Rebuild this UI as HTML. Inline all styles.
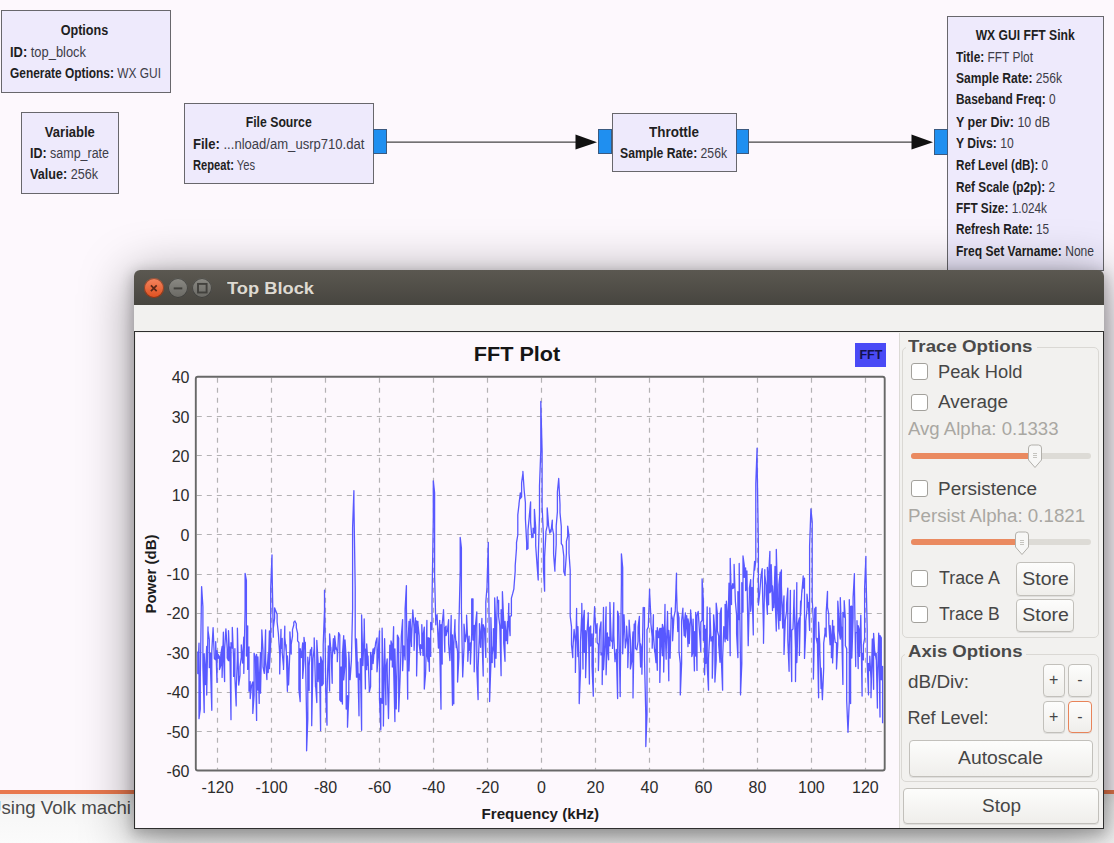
<!DOCTYPE html>
<html><head><meta charset="utf-8"><title>Top Block</title>
<style>
html,body{margin:0;padding:0}
body{width:1114px;height:843px;position:relative;overflow:hidden;background:#fdf8fd;font-family:"Liberation Sans",sans-serif}
</style></head><body>
<div style="position:absolute;left:1.0px;top:10.0px;width:170.0px;height:82.8px;background:#eeeafc;border:1.6px solid #68676c;box-sizing:border-box;"></div>
<div style="position:absolute;left:84.40px;width:0;display:flex;justify-content:center;top:23.15px;font-size:14px;line-height:1;white-space:nowrap;font-weight:normal;color:#1e1e22;"><span id="t0" style="display:inline-block;transform:scaleX(0.9000);transform-origin:50% 0;"><b>Options</b></span></div>
<div style="position:absolute;left:9.70px;top:44.85px;font-size:14px;line-height:1;white-space:nowrap;font-weight:normal;color:#1e1e22;"><span id="t1" style="display:inline-block;transform:scaleX(0.9212);transform-origin:0 0;"><b>ID:</b> <span style="color:#3d3d48">top_block</span></span></div>
<div style="position:absolute;left:9.70px;top:65.85px;font-size:14px;line-height:1;white-space:nowrap;font-weight:normal;color:#1e1e22;"><span id="t2" style="display:inline-block;transform:scaleX(0.8513);transform-origin:0 0;"><b>Generate Options:</b> <span style="color:#3d3d48">WX GUI</span></span></div>
<div style="position:absolute;left:21.0px;top:112.4px;width:97.5px;height:81.8px;background:#eeeafc;border:1.6px solid #68676c;box-sizing:border-box;"></div>
<div style="position:absolute;left:69.80px;width:0;display:flex;justify-content:center;top:124.95px;font-size:14px;line-height:1;white-space:nowrap;font-weight:normal;color:#1e1e22;"><span id="t3" style="display:inline-block;transform:scaleX(0.9310);transform-origin:50% 0;"><b>Variable</b></span></div>
<div style="position:absolute;left:29.60px;top:146.45px;font-size:14px;line-height:1;white-space:nowrap;font-weight:normal;color:#1e1e22;"><span id="t4" style="display:inline-block;transform:scaleX(0.8905);transform-origin:0 0;"><b>ID:</b> <span style="color:#3d3d48">samp_rate</span></span></div>
<div style="position:absolute;left:29.60px;top:167.15px;font-size:14px;line-height:1;white-space:nowrap;font-weight:normal;color:#1e1e22;"><span id="t5" style="display:inline-block;transform:scaleX(0.9007);transform-origin:0 0;"><b>Value:</b> <span style="color:#3d3d48">256k</span></span></div>
<div style="position:absolute;left:184.0px;top:102.5px;width:189.5px;height:81.3px;background:#eeeafc;border:1.6px solid #68676c;box-sizing:border-box;"></div>
<div style="position:absolute;left:373.0px;top:129.0px;width:13.7px;height:25.2px;background:#1f8ff0;border:1px solid #3b5a80;box-sizing:border-box;"></div>
<div style="position:absolute;left:278.80px;width:0;display:flex;justify-content:center;top:114.85px;font-size:14px;line-height:1;white-space:nowrap;font-weight:normal;color:#1e1e22;"><span id="t6" style="display:inline-block;transform:scaleX(0.8745);transform-origin:50% 0;"><b>File Source</b></span></div>
<div style="position:absolute;left:193.20px;top:136.55px;font-size:14px;line-height:1;white-space:nowrap;font-weight:normal;color:#1e1e22;"><span id="t7" style="display:inline-block;transform:scaleX(0.9332);transform-origin:0 0;"><b>File:</b> <span style="color:#3d3d48">...nload/am_usrp710.dat</span></span></div>
<div style="position:absolute;left:193.20px;top:157.65px;font-size:14px;line-height:1;white-space:nowrap;font-weight:normal;color:#1e1e22;"><span id="t8" style="display:inline-block;transform:scaleX(0.7965);transform-origin:0 0;"><b>Repeat:</b> <span style="color:#3d3d48">Yes</span></span></div>
<div style="position:absolute;left:611.5px;top:112.6px;width:125.0px;height:59.5px;background:#eeeafc;border:1.6px solid #68676c;box-sizing:border-box;"></div>
<div style="position:absolute;left:598.0px;top:129.3px;width:14.0px;height:25.1px;background:#1f8ff0;border:1px solid #3b5a80;box-sizing:border-box;"></div>
<div style="position:absolute;left:736.0px;top:129.3px;width:13.0px;height:25.1px;background:#1f8ff0;border:1px solid #3b5a80;box-sizing:border-box;"></div>
<div style="position:absolute;left:674.00px;width:0;display:flex;justify-content:center;top:124.55px;font-size:14px;line-height:1;white-space:nowrap;font-weight:normal;color:#1e1e22;"><span id="t9" style="display:inline-block;transform:scaleX(0.9595);transform-origin:50% 0;"><b>Throttle</b></span></div>
<div style="position:absolute;left:620.10px;top:146.45px;font-size:14px;line-height:1;white-space:nowrap;font-weight:normal;color:#1e1e22;"><span id="t10" style="display:inline-block;transform:scaleX(0.8703);transform-origin:0 0;"><b>Sample Rate:</b> <span style="color:#3d3d48">256k</span></span></div>
<div style="position:absolute;left:947.2px;top:16.0px;width:156.8px;height:254.5px;background:#eeeafc;border:1.6px solid #68676c;box-sizing:border-box;"></div>
<div style="position:absolute;left:934.2px;top:129.0px;width:14.0px;height:25.5px;background:#1f8ff0;border:1px solid #3b5a80;box-sizing:border-box;"></div>
<div style="position:absolute;left:1025.00px;width:0;display:flex;justify-content:center;top:27.75px;font-size:14px;line-height:1;white-space:nowrap;font-weight:normal;color:#1e1e22;"><span id="t11" style="display:inline-block;transform:scaleX(0.8658);transform-origin:50% 0;"><b>WX GUI FFT Sink</b></span></div>
<div style="position:absolute;left:956.00px;top:49.55px;font-size:14px;line-height:1;white-space:nowrap;font-weight:normal;color:#1e1e22;"><span id="t12" style="display:inline-block;transform:scaleX(0.8507);transform-origin:0 0;"><b>Title:</b> <span style="color:#3d3d48">FFT Plot</span></span></div>
<div style="position:absolute;left:956.00px;top:71.25px;font-size:14px;line-height:1;white-space:nowrap;font-weight:normal;color:#1e1e22;"><span id="t13" style="display:inline-block;transform:scaleX(0.8621);transform-origin:0 0;"><b>Sample Rate:</b> <span style="color:#3d3d48">256k</span></span></div>
<div style="position:absolute;left:956.00px;top:92.35px;font-size:14px;line-height:1;white-space:nowrap;font-weight:normal;color:#1e1e22;"><span id="t14" style="display:inline-block;transform:scaleX(0.8485);transform-origin:0 0;"><b>Baseband Freq:</b> <span style="color:#3d3d48">0</span></span></div>
<div style="position:absolute;left:956.00px;top:114.55px;font-size:14px;line-height:1;white-space:nowrap;font-weight:normal;color:#1e1e22;"><span id="t15" style="display:inline-block;transform:scaleX(0.8902);transform-origin:0 0;"><b>Y per Div:</b> <span style="color:#3d3d48">10 dB</span></span></div>
<div style="position:absolute;left:956.00px;top:135.65px;font-size:14px;line-height:1;white-space:nowrap;font-weight:normal;color:#1e1e22;"><span id="t16" style="display:inline-block;transform:scaleX(0.8652);transform-origin:0 0;"><b>Y Divs:</b> <span style="color:#3d3d48">10</span></span></div>
<div style="position:absolute;left:956.00px;top:158.05px;font-size:14px;line-height:1;white-space:nowrap;font-weight:normal;color:#1e1e22;"><span id="t17" style="display:inline-block;transform:scaleX(0.8327);transform-origin:0 0;"><b>Ref Level (dB):</b> <span style="color:#3d3d48">0</span></span></div>
<div style="position:absolute;left:956.00px;top:179.55px;font-size:14px;line-height:1;white-space:nowrap;font-weight:normal;color:#1e1e22;"><span id="t18" style="display:inline-block;transform:scaleX(0.8426);transform-origin:0 0;"><b>Ref Scale (p2p):</b> <span style="color:#3d3d48">2</span></span></div>
<div style="position:absolute;left:956.00px;top:201.05px;font-size:14px;line-height:1;white-space:nowrap;font-weight:normal;color:#1e1e22;"><span id="t19" style="display:inline-block;transform:scaleX(0.8413);transform-origin:0 0;"><b>FFT Size:</b> <span style="color:#3d3d48">1.024k</span></span></div>
<div style="position:absolute;left:956.00px;top:221.85px;font-size:14px;line-height:1;white-space:nowrap;font-weight:normal;color:#1e1e22;"><span id="t20" style="display:inline-block;transform:scaleX(0.8416);transform-origin:0 0;"><b>Refresh Rate:</b> <span style="color:#3d3d48">15</span></span></div>
<div style="position:absolute;left:956.00px;top:243.85px;font-size:14px;line-height:1;white-space:nowrap;font-weight:normal;color:#1e1e22;"><span id="t21" style="display:inline-block;transform:scaleX(0.8609);transform-origin:0 0;"><b>Freq Set Varname:</b> <span style="color:#3d3d48">None</span></span></div>
<svg style="position:absolute;left:0;top:0" width="1114" height="843"><line x1="386.7" y1="142.2" x2="578" y2="142.2" stroke="#444" stroke-width="1.3"/><polygon points="575.5,134.5 597,142.2 575.5,149.5" fill="#111"/><line x1="749" y1="142.2" x2="914" y2="142.2" stroke="#444" stroke-width="1.3"/><polygon points="911.5,134.5 933,142.2 911.5,149.5" fill="#111"/></svg>
<div style="position:absolute;left:0;top:790px;width:1114px;height:4px;background:#e8784d"></div>
<div style="position:absolute;left:0;top:794px;width:1114px;height:49px;background:linear-gradient(#ebebea,#f6f6f6 12px,#fbfbfb)"></div>
<div style="position:absolute;left:-11.60px;top:799.36px;font-size:18px;line-height:1;white-space:nowrap;font-weight:normal;color:#4a4a4a;"><span id="t22" style="display:inline-block;transform:scaleX(1.0358);transform-origin:0 0;">Using Volk machi</span></div>
<div style="position:absolute;left:134px;top:270.3px;width:970px;height:558.7px;border-radius:6px 6px 0 0;box-shadow:0 8px 50px 4px rgba(0,0,0,0.36),0 4px 14px 2px rgba(0,0,0,0.22);"></div>
<div style="position:absolute;left:134px;top:270.3px;width:970px;height:34.5px;border-radius:6px 6px 0 0;background:linear-gradient(#5b5851,#47453f);"></div>
<div style="position:absolute;left:134px;top:304.8px;width:970px;height:26.5px;background:#f2f1ef;"></div>
<div style="position:absolute;left:134px;top:331px;width:970px;height:498px;background:#f2f1ef;border:1.5px solid #2e2e2e;border-top-width:1.6px;box-sizing:border-box;"></div>
<div style="position:absolute;left:135.5px;top:333px;width:763.5px;height:494.5px;background:#fdf8fd;"></div>
<svg style="position:absolute;left:0;top:0" width="1114" height="843">
<path d="M217.5 377.7V769.5 M271.5 377.7V769.5 M325.5 377.7V769.5 M379.5 377.7V769.5 M433.5 377.7V769.5 M487.5 377.7V769.5 M541.5 377.7V769.5 M595.5 377.7V769.5 M649.5 377.7V769.5 M703.5 377.7V769.5 M757.5 377.7V769.5 M811.5 377.7V769.5 M865.5 377.7V769.5 M196.8 416.5H883.7 M196.8 455.5H883.7 M196.8 495.5H883.7 M196.8 534.5H883.7 M196.8 574.5H883.7 M196.8 613.5H883.7 M196.8 652.5H883.7 M196.8 692.5H883.7 M196.8 731.5H883.7" stroke="#b4b2b4" stroke-width="1.2" stroke-dasharray="5 5" fill="none"/>
<path id="trace" d="M197.8 651.5 L197.8 673.6 L199.0 643.2 L199.0 718.7 L200.3 709.1 L200.3 677.6 L201.6 586.6 L202.9 606.8 L202.9 666.0 L204.2 712.5 L204.2 653.7 L205.4 684.6 L205.4 675.9 L206.7 646.3 L206.7 695.1 L208.0 627.0 L208.0 630.3 L209.3 639.7 L209.3 667.7 L210.6 653.4 L210.6 671.1 L211.8 710.3 L211.8 651.1 L213.1 627.7 L213.1 628.0 L214.4 658.7 L215.7 659.7 L215.7 641.7 L217.0 682.4 L217.0 650.7 L218.2 658.3 L218.2 654.6 L219.5 656.8 L219.5 669.6 L220.8 665.5 L220.8 654.7 L222.1 646.5 L222.1 677.4 L223.4 632.2 L223.4 649.5 L224.6 681.6 L224.6 649.4 L225.9 628.9 L227.2 649.0 L227.2 657.9 L228.5 660.6 L228.5 630.7 L229.8 661.1 L229.8 646.8 L231.0 719.7 L231.0 642.7 L232.3 648.1 L232.3 627.5 L233.6 659.5 L233.6 676.4 L234.9 648.7 L234.9 677.8 L236.2 705.9 L236.2 690.0 L237.4 658.1 L237.4 628.2 L238.7 685.1 L240.0 675.2 L240.0 666.9 L241.3 657.1 L241.3 644.8 L242.6 663.0 L242.6 661.7 L243.8 637.2 L243.8 673.4 L245.1 609.5 L245.1 573.4 L246.4 580.4 L246.4 656.0 L247.7 625.8 L247.7 669.4 L249.0 646.8 L249.0 691.2 L250.2 681.7 L250.2 698.6 L251.5 685.6 L252.8 681.9 L252.8 713.4 L254.1 695.2 L254.1 653.2 L255.4 656.9 L255.4 659.0 L256.6 720.4 L256.6 654.5 L257.9 690.1 L257.9 656.8 L259.2 703.4 L259.2 683.9 L260.5 652.6 L260.5 693.2 L261.8 638.5 L261.8 629.9 L263.0 650.2 L263.0 666.8 L264.3 673.4 L265.6 630.0 L265.6 659.9 L266.9 679.5 L266.9 674.8 L268.2 653.7 L268.2 672.5 L269.4 630.9 L269.4 668.6 L270.7 643.3 L270.7 588.2 L272.0 555.0 L272.0 564.6 L273.3 637.2 L273.3 628.4 L274.6 618.2 L274.6 607.8 L275.8 611.1 L277.1 614.2 L277.1 621.7 L278.4 633.7 L278.4 633.9 L279.7 654.4 L279.7 673.9 L281.0 629.3 L281.0 648.4 L282.2 638.4 L282.2 652.5 L283.5 666.6 L283.5 669.4 L284.8 626.2 L284.8 637.4 L286.1 650.5 L286.1 644.7 L287.4 691.3 L287.4 655.9 L288.6 684.9 L289.9 649.2 L289.9 631.8 L291.2 654.1 L291.2 644.3 L292.5 636.1 L292.5 629.7 L293.8 625.0 L293.8 622.1 L295.0 620.9 L295.0 621.4 L296.3 623.7 L296.3 627.6 L297.6 633.4 L297.6 640.8 L298.9 642.7 L298.9 689.5 L300.2 701.6 L300.2 648.6 L301.4 657.5 L302.7 642.9 L302.7 678.4 L304.0 660.6 L304.0 637.4 L305.3 649.2 L305.3 642.3 L306.6 719.3 L306.6 750.8 L307.8 719.3 L307.8 657.2 L309.1 690.5 L309.1 666.1 L310.4 650.0 L310.4 655.2 L311.7 647.5 L311.7 725.7 L313.0 658.7 L314.2 648.1 L314.2 637.8 L315.5 686.9 L315.5 683.1 L316.8 702.5 L316.8 640.4 L318.1 662.5 L318.1 681.6 L319.4 665.9 L319.4 663.4 L320.6 730.6 L320.6 656.8 L321.9 661.2 L321.9 685.7 L323.2 683.6 L323.2 645.1 L324.5 610.0 L324.5 590.2 L325.8 693.7 L327.0 725.2 L327.0 693.7 L328.3 648.3 L328.3 645.8 L329.6 691.0 L329.6 633.9 L330.9 650.7 L330.9 647.5 L332.2 683.3 L332.2 660.1 L333.4 638.7 L333.4 647.9 L334.7 653.6 L334.7 635.8 L336.0 649.3 L336.0 646.8 L337.3 652.2 L337.3 661.7 L338.6 632.6 L339.8 635.0 L339.8 699.8 L341.1 701.6 L341.1 667.0 L342.4 704.0 L342.4 655.4 L343.7 635.7 L343.7 679.9 L345.0 665.3 L345.0 640.0 L346.2 658.4 L346.2 709.1 L347.5 695.7 L347.5 727.2 L348.8 695.7 L348.8 652.1 L350.1 679.6 L351.4 660.4 L351.4 659.7 L352.6 608.8 L352.6 527.7 L353.9 490.7 L353.9 502.3 L355.2 587.8 L355.2 636.0 L356.5 677.2 L356.5 639.0 L357.8 677.4 L357.8 661.9 L359.0 715.8 L359.0 674.0 L360.3 679.6 L360.3 658.6 L361.6 730.3 L361.6 615.0 L362.9 665.6 L364.2 630.6 L364.2 618.9 L365.4 688.9 L365.4 649.1 L366.7 669.7 L366.7 643.9 L368.0 665.5 L368.0 655.9 L369.3 688.5 L369.3 691.8 L370.6 686.7 L370.6 652.4 L371.8 669.5 L371.8 658.6 L373.1 648.9 L373.1 663.5 L374.4 648.0 L374.4 653.6 L375.7 642.5 L377.0 637.8 L377.0 671.8 L378.2 657.6 L378.2 651.3 L379.5 631.0 L379.5 698.4 L380.8 729.9 L380.8 698.4 L382.1 703.3 L382.1 628.1 L383.4 687.0 L383.4 726.1 L384.6 647.3 L384.6 638.6 L385.9 704.8 L385.9 669.3 L387.2 658.9 L387.2 670.2 L388.5 718.5 L389.8 645.1 L389.8 645.8 L391.0 660.0 L391.0 640.8 L392.3 645.8 L392.3 667.1 L393.6 626.7 L393.6 666.1 L394.9 721.5 L394.9 648.8 L396.2 703.6 L396.2 708.9 L397.4 651.0 L397.4 635.1 L398.7 638.3 L398.7 711.7 L400.0 680.8 L401.3 639.5 L401.3 636.6 L402.6 619.6 L402.6 670.7 L403.8 645.9 L403.8 646.7 L405.1 659.8 L405.1 609.3 L406.4 585.6 L406.4 607.2 L407.7 699.2 L407.7 649.8 L409.0 621.4 L409.0 670.9 L410.2 632.3 L410.2 619.1 L411.5 646.4 L411.5 640.0 L412.8 609.9 L414.1 628.2 L414.1 650.3 L415.4 617.8 L415.4 632.6 L416.6 620.8 L416.6 675.9 L417.9 621.4 L417.9 623.4 L419.2 635.9 L419.2 644.3 L420.5 655.0 L420.5 644.6 L421.8 648.5 L421.8 624.6 L423.0 655.5 L423.0 636.6 L424.3 627.1 L424.3 689.0 L425.6 673.4 L426.9 620.4 L426.9 653.8 L428.2 661.5 L428.2 637.6 L429.4 671.3 L429.4 638.1 L430.7 656.4 L430.7 622.4 L432.0 629.7 L432.0 602.7 L433.3 517.9 L433.3 480.8 L434.6 492.8 L434.6 575.2 L435.8 624.8 L435.8 620.9 L437.1 614.7 L438.4 648.0 L438.4 648.1 L439.7 620.3 L439.7 646.6 L441.0 709.2 L441.0 624.7 L442.2 664.0 L442.2 624.0 L443.5 610.7 L443.5 609.6 L444.8 652.0 L444.8 628.5 L446.1 626.1 L446.1 635.7 L447.4 630.4 L447.4 631.4 L448.6 619.7 L448.6 643.7 L449.9 660.5 L451.2 615.5 L451.2 630.4 L452.5 705.3 L452.5 634.8 L453.8 703.8 L453.8 645.4 L455.0 619.6 L455.0 630.8 L456.3 647.7 L456.3 641.2 L457.6 652.1 L457.6 682.0 L458.9 657.6 L458.9 625.8 L460.2 570.5 L460.2 537.5 L461.4 547.8 L461.4 607.4 L462.7 676.9 L464.0 647.2 L464.0 624.2 L465.3 637.6 L465.3 641.6 L466.6 633.3 L466.6 615.2 L467.8 644.3 L467.8 661.3 L469.1 636.1 L469.1 650.4 L470.4 642.9 L470.4 664.0 L471.7 634.1 L471.7 599.0 L473.0 598.9 L473.0 640.1 L474.2 625.5 L474.2 671.8 L475.5 625.0 L476.8 611.9 L476.8 668.1 L478.1 699.6 L478.1 668.1 L479.4 634.1 L479.4 623.7 L480.6 647.3 L480.6 639.8 L481.9 618.5 L481.9 635.7 L483.2 676.1 L483.2 624.7 L484.5 628.6 L484.5 630.6 L485.8 657.4 L485.8 602.0 L487.0 587.3 L488.3 542.3 L488.3 552.7 L489.6 663.4 L489.6 701.6 L490.9 663.4 L490.9 617.6 L492.2 662.6 L492.2 654.9 L493.4 645.4 L493.4 628.6 L494.7 667.2 L494.7 598.0 L496.0 631.5 L496.0 658.3 L497.3 596.8 L497.3 602.9 L498.6 600.3 L498.6 616.4 L499.8 625.7 L501.1 675.7 L501.1 609.7 L502.4 628.3 L502.4 591.7 L503.7 621.4 L503.7 642.9 L505.0 661.3 L505.0 621.4 L506.2 640.3 L506.2 640.7 L507.5 621.7 L507.5 643.7 L508.8 603.3 L508.8 620.1 L510.1 635.6 L510.1 616.2 L511.4 615.8 L511.4 598.2 L512.6 593.9 L513.9 588.8 L513.9 588.3 L515.2 571.0 L515.2 565.7 L516.5 548.3 L516.5 542.7 L517.8 535.0 L517.8 514.8 L519.0 504.6 L519.0 503.8 L520.3 493.0 L520.3 498.6 L521.6 496.8 L521.6 482.9 L522.9 473.3 L522.9 471.5 L524.2 490.7 L525.4 502.8 L525.4 518.7 L526.7 543.4 L526.7 549.6 L528.0 548.4 L528.0 530.1 L529.3 516.5 L529.3 516.1 L530.6 501.8 L530.6 521.6 L531.8 537.7 L531.8 533.7 L533.1 537.3 L533.1 528.1 L534.4 533.2 L534.4 509.4 L535.7 527.8 L535.7 545.8 L537.0 564.3 L538.2 580.0 L538.2 560.2 L539.5 514.5 L539.5 485.9 L540.8 450.3 L540.8 401.5 L542.1 451.5 L542.1 506.2 L543.4 535.1 L543.4 568.8 L544.6 591.2 L544.6 557.2 L545.9 533.9 L545.9 531.7 L547.2 525.9 L547.2 507.8 L548.5 523.9 L548.5 525.0 L549.8 533.0 L551.0 529.3 L551.0 531.8 L552.3 520.1 L552.3 527.6 L553.6 534.1 L553.6 554.1 L554.9 571.2 L554.9 567.2 L556.2 544.4 L556.2 526.0 L557.4 511.8 L557.4 492.0 L558.7 478.9 L558.7 478.5 L560.0 504.6 L560.0 512.6 L561.3 526.8 L561.3 543.6 L562.6 545.7 L563.8 556.3 L563.8 571.6 L565.1 575.5 L565.1 572.6 L566.4 553.6 L566.4 541.4 L567.7 536.1 L567.7 526.1 L569.0 536.0 L569.0 553.1 L570.2 570.2 L570.2 616.2 L571.5 626.9 L571.5 644.6 L572.8 657.6 L572.8 650.0 L574.1 629.5 L575.4 642.4 L575.4 672.4 L576.6 608.4 L576.6 619.4 L577.9 656.5 L577.9 626.6 L579.2 672.0 L579.2 703.6 L580.5 672.0 L580.5 641.5 L581.8 612.1 L581.8 603.3 L583.0 669.1 L583.0 622.6 L584.3 610.3 L584.3 652.4 L585.6 630.7 L585.6 677.7 L586.9 633.2 L588.2 615.9 L588.2 612.7 L589.4 684.1 L589.4 628.3 L590.7 626.0 L590.7 646.0 L592.0 634.0 L592.0 665.7 L593.3 696.2 L593.3 639.4 L594.6 606.6 L594.6 609.8 L595.8 630.0 L595.8 633.1 L597.1 623.7 L597.1 642.4 L598.4 644.7 L598.4 670.5 L599.7 629.5 L601.0 621.9 L601.0 654.9 L602.2 652.9 L602.2 684.5 L603.5 607.5 L603.5 669.7 L604.8 646.5 L604.8 647.5 L606.1 606.8 L606.1 674.8 L607.4 633.0 L607.4 645.4 L608.6 659.8 L608.6 637.2 L609.9 645.9 L609.9 602.3 L611.2 640.3 L612.5 642.5 L612.5 648.4 L613.8 602.6 L613.8 635.2 L615.0 661.7 L615.0 660.3 L616.3 651.4 L616.3 649.4 L617.6 698.6 L617.6 611.2 L618.9 616.4 L618.9 628.8 L620.2 696.6 L620.2 687.5 L621.4 583.7 L621.4 553.8 L622.7 567.9 L622.7 653.8 L624.0 614.7 L625.3 645.1 L625.3 647.9 L626.6 637.9 L626.6 626.2 L627.8 645.3 L627.8 667.6 L629.1 628.8 L629.1 620.1 L630.4 639.8 L630.4 668.9 L631.7 661.6 L631.7 654.5 L633.0 631.8 L633.0 697.9 L634.2 624.1 L634.2 629.7 L635.5 620.9 L635.5 648.4 L636.8 649.9 L638.1 641.5 L638.1 627.2 L639.4 616.3 L639.4 632.8 L640.6 667.1 L640.6 644.0 L641.9 650.9 L641.9 674.2 L643.2 607.5 L643.2 610.2 L644.5 607.6 L644.5 659.2 L645.8 715.0 L645.8 746.5 L647.0 715.0 L647.0 629.7 L648.3 626.9 L649.6 589.3 L649.6 592.1 L650.9 617.7 L650.9 623.6 L652.2 637.2 L652.2 648.2 L653.4 614.7 L653.4 633.9 L654.7 652.2 L654.7 649.1 L656.0 662.7 L656.0 630.7 L657.3 670.3 L657.3 627.7 L658.6 637.7 L658.6 634.7 L659.8 628.3 L659.8 682.4 L661.1 628.1 L662.4 655.8 L662.4 624.4 L663.7 630.0 L663.7 672.1 L665.0 604.5 L665.0 623.8 L666.2 659.2 L666.2 652.0 L667.5 614.1 L667.5 611.5 L668.8 680.8 L668.8 630.3 L670.1 646.7 L670.1 658.2 L671.4 608.0 L671.4 614.9 L672.6 619.2 L672.6 640.8 L673.9 617.3 L675.2 610.9 L675.2 611.7 L676.5 573.1 L676.5 588.2 L677.8 631.5 L677.8 612.0 L679.0 617.9 L679.0 651.0 L680.3 663.4 L680.3 694.9 L681.6 663.4 L681.6 620.7 L682.9 608.2 L682.9 613.4 L684.2 635.7 L684.2 625.1 L685.4 612.9 L685.4 637.1 L686.7 615.6 L688.0 646.6 L688.0 618.9 L689.3 626.8 L689.3 643.5 L690.6 613.4 L690.6 610.0 L691.8 626.6 L691.8 656.5 L693.1 651.4 L693.1 619.1 L694.4 670.9 L694.4 631.6 L695.7 656.0 L695.7 612.3 L697.0 670.4 L697.0 615.5 L698.2 611.4 L699.5 631.7 L699.5 631.8 L700.8 651.7 L700.8 622.2 L702.1 620.3 L702.1 578.8 L703.4 601.3 L703.4 640.4 L704.6 625.4 L704.6 674.8 L705.9 629.2 L705.9 663.3 L707.2 606.8 L707.2 666.3 L708.5 690.2 L708.5 658.7 L709.8 633.2 L709.8 607.9 L711.0 641.1 L712.3 636.7 L712.3 678.2 L713.6 629.5 L713.6 614.8 L714.9 631.3 L714.9 682.0 L716.2 660.5 L716.2 603.2 L717.4 613.8 L717.4 630.8 L718.7 636.0 L718.7 644.9 L720.0 662.3 L720.0 614.1 L721.3 608.0 L721.3 658.7 L722.6 690.2 L722.6 658.7 L723.8 626.6 L725.1 641.8 L725.1 604.3 L726.4 638.9 L726.4 601.2 L727.7 620.2 L727.7 640.4 L729.0 583.2 L729.0 584.3 L730.2 655.7 L730.2 558.3 L731.5 604.5 L731.5 589.5 L732.8 583.7 L732.8 588.5 L734.1 587.2 L734.1 564.5 L735.4 601.6 L736.6 615.3 L736.6 633.7 L737.9 657.6 L737.9 591.6 L739.2 619.6 L739.2 563.4 L740.5 663.4 L740.5 694.9 L741.8 663.4 L741.8 582.7 L743.0 612.1 L743.0 556.0 L744.3 565.6 L744.3 577.4 L745.6 567.8 L745.6 590.6 L746.9 588.2 L746.9 571.0 L748.2 645.7 L749.4 594.8 L749.4 588.2 L750.7 579.7 L750.7 611.3 L752.0 590.7 L752.0 587.5 L753.3 634.9 L753.3 580.5 L754.6 561.3 L754.6 570.1 L755.8 560.7 L755.8 483.8 L757.1 448.1 L757.1 459.6 L758.4 546.1 L758.4 605.1 L759.7 593.1 L759.7 593.3 L761.0 576.2 L762.2 568.6 L762.2 576.2 L763.5 631.8 L763.5 643.3 L764.8 569.7 L764.8 574.5 L766.1 585.4 L766.1 594.5 L767.4 614.3 L767.4 567.5 L768.6 604.8 L768.6 576.2 L769.9 551.3 L769.9 592.8 L771.2 590.1 L771.2 564.7 L772.5 610.6 L772.5 586.0 L773.8 607.6 L775.0 566.4 L775.0 596.1 L776.3 631.1 L776.3 549.4 L777.6 599.0 L777.6 609.6 L778.9 629.0 L778.9 584.9 L780.2 572.1 L780.2 620.6 L781.4 570.0 L781.4 585.8 L782.7 628.1 L782.7 612.8 L784.0 595.9 L784.0 654.4 L785.3 620.3 L786.6 611.0 L786.6 603.7 L787.8 588.1 L787.8 639.8 L789.1 671.3 L789.1 656.2 L790.4 590.3 L790.4 615.5 L791.7 681.5 L791.7 630.2 L793.0 629.0 L793.0 629.1 L794.2 590.1 L794.2 606.0 L795.5 648.1 L795.5 681.6 L796.8 582.6 L796.8 662.6 L798.1 623.3 L799.4 617.8 L799.4 655.4 L800.6 601.1 L800.6 615.5 L801.9 589.7 L801.9 592.4 L803.2 576.0 L803.2 588.2 L804.5 578.1 L804.5 658.4 L805.8 630.4 L805.8 621.2 L807.0 609.4 L807.0 594.2 L808.3 607.4 L808.3 602.4 L809.6 630.4 L809.6 546.2 L810.9 508.8 L812.2 522.0 L812.2 599.5 L813.4 622.0 L813.4 679.1 L814.7 620.5 L814.7 609.0 L816.0 607.2 L816.0 637.1 L817.3 643.7 L817.3 638.4 L818.6 697.8 L818.6 622.2 L819.8 644.8 L819.8 650.8 L821.1 688.6 L821.1 668.1 L822.4 699.6 L823.7 668.1 L823.7 643.1 L825.0 632.9 L825.0 628.1 L826.2 636.8 L826.2 612.3 L827.5 591.4 L827.5 607.2 L828.8 614.7 L828.8 623.1 L830.1 644.8 L830.1 625.6 L831.4 642.1 L831.4 657.7 L832.6 620.3 L832.6 662.9 L833.9 626.1 L833.9 631.0 L835.2 642.4 L836.5 642.9 L836.5 669.0 L837.8 643.9 L837.8 601.2 L839.0 619.1 L839.0 630.1 L840.3 639.0 L840.3 597.6 L841.6 637.2 L841.6 627.0 L842.9 684.4 L842.9 612.3 L844.2 617.0 L844.2 600.7 L845.4 619.1 L845.4 645.7 L846.7 648.7 L846.7 700.8 L848.0 732.3 L849.3 700.8 L849.3 599.7 L850.6 703.6 L850.6 606.5 L851.8 606.2 L851.8 658.0 L853.1 618.1 L853.1 597.5 L854.4 573.7 L854.4 585.5 L855.7 666.5 L855.7 632.6 L857.0 632.5 L857.0 620.7 L858.2 668.5 L858.2 625.7 L859.5 630.8 L859.5 656.4 L860.8 615.1 L862.1 696.0 L862.1 653.2 L863.4 659.9 L863.4 644.9 L864.6 638.6 L864.6 588.6 L865.9 556.3 L865.9 567.6 L867.2 629.5 L867.2 663.4 L868.5 694.9 L868.5 663.4 L869.8 670.7 L869.8 656.2 L871.0 678.9 L871.0 697.7 L872.3 639.0 L873.6 689.3 L873.6 633.3 L874.9 655.3 L874.9 651.7 L876.2 659.6 L876.2 653.3 L877.4 708.0 L877.4 683.9 L878.7 633.2 L878.7 640.7 L880.0 717.1 L880.0 635.5 L881.3 637.8 L881.3 679.8 L882.6 666.4 L882.6 723.3" stroke="#5858ff" stroke-width="1.3" fill="none" stroke-linejoin="round"/>
<rect x="195.8" y="376.7" width="688.9" height="393.8" rx="2" fill="none" stroke="#686868" stroke-width="1.9"/>
</svg>
<div style="position:absolute;left:899px;top:333px;width:1px;height:494.5px;background:#dcdad6;"></div>
<div style="position:absolute;left:143.8px;top:278.2px;width:20.0px;height:20.0px;border-radius:50%;background:linear-gradient(#f48660,#de4f1e);box-shadow:inset 0 0 0 1px rgba(40,20,10,0.45)"></div>
<div style="position:absolute;left:168.0px;top:278.2px;width:20.0px;height:20.0px;border-radius:50%;background:linear-gradient(#8b8a84,#696863);box-shadow:inset 0 0 0 1px rgba(30,30,28,0.55)"></div>
<div style="position:absolute;left:192.3px;top:278.2px;width:20.0px;height:20.0px;border-radius:50%;background:linear-gradient(#8b8a84,#696863);box-shadow:inset 0 0 0 1px rgba(30,30,28,0.55)"></div>
<svg style="position:absolute;left:0;top:0" width="1114" height="843"><path d="M150.9 285.3 L156.7 291.1 M156.7 285.3 L150.9 291.1" stroke="#5a2818" stroke-width="1.7"/><path d="M173.7 288.4 L182.3 288.4" stroke="#42413d" stroke-width="2"/><rect x="198.0" y="283.9" width="8.6" height="8.6" fill="none" stroke="#42413d" stroke-width="1.9"/></svg>
<div style="position:absolute;left:227.40px;top:281.06px;font-size:16px;line-height:1;white-space:nowrap;font-weight:bold;color:#dedad2;"><span id="t23" style="display:inline-block;transform:scaleX(1.1424);transform-origin:0 0;">Top Block</span></div>
<div style="position:absolute;left:517.00px;width:0;display:flex;justify-content:center;top:343.42px;font-size:21px;line-height:1;white-space:nowrap;font-weight:bold;color:#151515;"><span id="t24" style="display:inline-block;transform:scaleX(1.0300);transform-origin:50% 0;">FFT Plot</span></div>
<div style="position:absolute;left:855.3px;top:342.8px;width:30.3px;height:24px;background:#4a4af6"></div>
<div style="position:absolute;left:870.50px;width:0;display:flex;justify-content:center;top:348.30px;font-size:13px;line-height:1;white-space:nowrap;font-weight:bold;color:#12124e;"><span id="t25" style="display:inline-block;transform:scaleX(0.9652);transform-origin:50% 0;">FFT</span></div>
<div style="position:absolute;right:924.50px;top:370.16px;font-size:16px;line-height:1;white-space:nowrap;font-weight:normal;color:#2c2c2c;"><span id="t26" style="display:inline-block;">40</span></div>
<div style="position:absolute;right:924.50px;top:409.54px;font-size:16px;line-height:1;white-space:nowrap;font-weight:normal;color:#2c2c2c;"><span id="t27" style="display:inline-block;">30</span></div>
<div style="position:absolute;right:924.50px;top:448.92px;font-size:16px;line-height:1;white-space:nowrap;font-weight:normal;color:#2c2c2c;"><span id="t28" style="display:inline-block;">20</span></div>
<div style="position:absolute;right:924.50px;top:488.30px;font-size:16px;line-height:1;white-space:nowrap;font-weight:normal;color:#2c2c2c;"><span id="t29" style="display:inline-block;">10</span></div>
<div style="position:absolute;right:924.50px;top:527.68px;font-size:16px;line-height:1;white-space:nowrap;font-weight:normal;color:#2c2c2c;"><span id="t30" style="display:inline-block;">0</span></div>
<div style="position:absolute;right:924.50px;top:567.06px;font-size:16px;line-height:1;white-space:nowrap;font-weight:normal;color:#2c2c2c;"><span id="t31" style="display:inline-block;">-10</span></div>
<div style="position:absolute;right:924.50px;top:606.44px;font-size:16px;line-height:1;white-space:nowrap;font-weight:normal;color:#2c2c2c;"><span id="t32" style="display:inline-block;">-20</span></div>
<div style="position:absolute;right:924.50px;top:645.82px;font-size:16px;line-height:1;white-space:nowrap;font-weight:normal;color:#2c2c2c;"><span id="t33" style="display:inline-block;">-30</span></div>
<div style="position:absolute;right:924.50px;top:685.20px;font-size:16px;line-height:1;white-space:nowrap;font-weight:normal;color:#2c2c2c;"><span id="t34" style="display:inline-block;">-40</span></div>
<div style="position:absolute;right:924.50px;top:724.58px;font-size:16px;line-height:1;white-space:nowrap;font-weight:normal;color:#2c2c2c;"><span id="t35" style="display:inline-block;">-50</span></div>
<div style="position:absolute;right:924.50px;top:763.96px;font-size:16px;line-height:1;white-space:nowrap;font-weight:normal;color:#2c2c2c;"><span id="t36" style="display:inline-block;">-60</span></div>
<div style="position:absolute;left:217.62px;width:0;display:flex;justify-content:center;top:779.76px;font-size:16px;line-height:1;white-space:nowrap;font-weight:normal;color:#2c2c2c;"><span id="t37" style="display:inline-block;">-120</span></div>
<div style="position:absolute;left:271.60px;width:0;display:flex;justify-content:center;top:779.76px;font-size:16px;line-height:1;white-space:nowrap;font-weight:normal;color:#2c2c2c;"><span id="t38" style="display:inline-block;">-100</span></div>
<div style="position:absolute;left:325.58px;width:0;display:flex;justify-content:center;top:779.76px;font-size:16px;line-height:1;white-space:nowrap;font-weight:normal;color:#2c2c2c;"><span id="t39" style="display:inline-block;">-80</span></div>
<div style="position:absolute;left:379.56px;width:0;display:flex;justify-content:center;top:779.76px;font-size:16px;line-height:1;white-space:nowrap;font-weight:normal;color:#2c2c2c;"><span id="t40" style="display:inline-block;">-60</span></div>
<div style="position:absolute;left:433.54px;width:0;display:flex;justify-content:center;top:779.76px;font-size:16px;line-height:1;white-space:nowrap;font-weight:normal;color:#2c2c2c;"><span id="t41" style="display:inline-block;">-40</span></div>
<div style="position:absolute;left:487.52px;width:0;display:flex;justify-content:center;top:779.76px;font-size:16px;line-height:1;white-space:nowrap;font-weight:normal;color:#2c2c2c;"><span id="t42" style="display:inline-block;">-20</span></div>
<div style="position:absolute;left:541.50px;width:0;display:flex;justify-content:center;top:779.76px;font-size:16px;line-height:1;white-space:nowrap;font-weight:normal;color:#2c2c2c;"><span id="t43" style="display:inline-block;">0</span></div>
<div style="position:absolute;left:595.48px;width:0;display:flex;justify-content:center;top:779.76px;font-size:16px;line-height:1;white-space:nowrap;font-weight:normal;color:#2c2c2c;"><span id="t44" style="display:inline-block;">20</span></div>
<div style="position:absolute;left:649.46px;width:0;display:flex;justify-content:center;top:779.76px;font-size:16px;line-height:1;white-space:nowrap;font-weight:normal;color:#2c2c2c;"><span id="t45" style="display:inline-block;">40</span></div>
<div style="position:absolute;left:703.44px;width:0;display:flex;justify-content:center;top:779.76px;font-size:16px;line-height:1;white-space:nowrap;font-weight:normal;color:#2c2c2c;"><span id="t46" style="display:inline-block;">60</span></div>
<div style="position:absolute;left:757.42px;width:0;display:flex;justify-content:center;top:779.76px;font-size:16px;line-height:1;white-space:nowrap;font-weight:normal;color:#2c2c2c;"><span id="t47" style="display:inline-block;">80</span></div>
<div style="position:absolute;left:811.40px;width:0;display:flex;justify-content:center;top:779.76px;font-size:16px;line-height:1;white-space:nowrap;font-weight:normal;color:#2c2c2c;"><span id="t48" style="display:inline-block;">100</span></div>
<div style="position:absolute;left:865.38px;width:0;display:flex;justify-content:center;top:779.76px;font-size:16px;line-height:1;white-space:nowrap;font-weight:normal;color:#2c2c2c;"><span id="t49" style="display:inline-block;">120</span></div>
<div style="position:absolute;left:151px;top:573.5px;width:0;height:0;"><div style="position:absolute;left:-60px;top:-8px;width:120px;height:16px;transform:rotate(-90deg);text-align:center;font-size:15px;line-height:16px;font-weight:bold;color:#1c1c1c;white-space:nowrap">Power (dB)</div></div>
<div style="position:absolute;left:540.50px;width:0;display:flex;justify-content:center;top:805.50px;font-size:15px;line-height:1;white-space:nowrap;font-weight:bold;color:#1c1c1c;"><span id="t50" style="display:inline-block;transform:scaleX(1.0077);transform-origin:50% 0;">Frequency (kHz)</span></div>
<div style="position:absolute;left:901.8px;top:347.4px;width:196.8px;height:290.6px;border:1px solid #dad8d4;border-radius:5px;box-sizing:border-box;"></div>
<div style="position:absolute;left:906px;top:338px;width:131px;height:16px;background:#f2f1ef"></div>
<div style="position:absolute;left:907.80px;top:338.41px;font-size:17px;line-height:1;white-space:nowrap;font-weight:bold;color:#4a4a4a;"><span id="t51" style="display:inline-block;transform:scaleX(1.0981);transform-origin:0 0;">Trace Options</span></div>
<div style="position:absolute;left:911.4px;top:363.2px;width:17px;height:17px;background:#fff;border:1px solid #a3a19c;border-radius:3px;box-sizing:border-box;"></div>
<div style="position:absolute;left:938.40px;top:362.66px;font-size:18px;line-height:1;white-space:nowrap;font-weight:normal;color:#464646;"><span id="t52" style="display:inline-block;transform:scaleX(1.0161);transform-origin:0 0;">Peak Hold</span></div>
<div style="position:absolute;left:911.4px;top:393.7px;width:17px;height:17px;background:#fff;border:1px solid #a3a19c;border-radius:3px;box-sizing:border-box;"></div>
<div style="position:absolute;left:938.40px;top:392.96px;font-size:18px;line-height:1;white-space:nowrap;font-weight:normal;color:#464646;"><span id="t53" style="display:inline-block;transform:scaleX(1.0492);transform-origin:0 0;">Average</span></div>
<div style="position:absolute;left:907.50px;top:419.96px;font-size:18px;line-height:1;white-space:nowrap;font-weight:normal;color:#a9a7a2;"><span id="t54" style="display:inline-block;transform:scaleX(1.0323);transform-origin:0 0;">Avg Alpha: 0.1333</span></div>
<div style="position:absolute;left:911.4px;top:452.8px;width:179.6px;height:6px;border-radius:3px;background:#dddbd6"></div><div style="position:absolute;left:911.4px;top:452.8px;width:123.6px;height:6px;border-radius:3px;background:#ea8a60"></div><svg style="position:absolute;left:1027.0px;top:444.3px" width="16" height="25"><path d="M1.5 4 Q1.5 1 4.5 1 H11.5 Q14.5 1 14.5 4 V16 L8 23.5 L1.5 16 Z" fill="#f7f7f6" stroke="#b2b0ab" stroke-width="1"/><path d="M6 9.5H10M6 11.5H10M6 13.5H10" stroke="#b8b6b1" stroke-width="0.8"/></svg>
<div style="position:absolute;left:911.4px;top:480.3px;width:17px;height:17px;background:#fff;border:1px solid #a3a19c;border-radius:3px;box-sizing:border-box;"></div>
<div style="position:absolute;left:938.40px;top:479.96px;font-size:18px;line-height:1;white-space:nowrap;font-weight:normal;color:#464646;"><span id="t55" style="display:inline-block;transform:scaleX(1.0527);transform-origin:0 0;">Persistence</span></div>
<div style="position:absolute;left:908.20px;top:506.66px;font-size:18px;line-height:1;white-space:nowrap;font-weight:normal;color:#a9a7a2;"><span id="t56" style="display:inline-block;transform:scaleX(1.0416);transform-origin:0 0;">Persist Alpha: 0.1821</span></div>
<div style="position:absolute;left:911.4px;top:539.2px;width:179.6px;height:6px;border-radius:3px;background:#dddbd6"></div><div style="position:absolute;left:911.4px;top:539.2px;width:110.6px;height:6px;border-radius:3px;background:#ea8a60"></div><svg style="position:absolute;left:1014.0px;top:530.7px" width="16" height="25"><path d="M1.5 4 Q1.5 1 4.5 1 H11.5 Q14.5 1 14.5 4 V16 L8 23.5 L1.5 16 Z" fill="#f7f7f6" stroke="#b2b0ab" stroke-width="1"/><path d="M6 9.5H10M6 11.5H10M6 13.5H10" stroke="#b8b6b1" stroke-width="0.8"/></svg>
<div style="position:absolute;left:911.4px;top:570.0px;width:17px;height:17px;background:#fff;border:1px solid #a3a19c;border-radius:3px;box-sizing:border-box;"></div>
<div style="position:absolute;left:938.80px;top:568.56px;font-size:18px;line-height:1;white-space:nowrap;font-weight:normal;color:#464646;"><span id="t57" style="display:inline-block;transform:scaleX(0.9909);transform-origin:0 0;">Trace A</span></div>
<div style="position:absolute;left:1016.3px;top:562.0px;width:59.1px;height:33.6px;background:linear-gradient(#fdfdfc,#efeeeb);border:1px solid #c2c0bb;border-radius:4px;box-sizing:border-box;box-shadow:0 1px 0 rgba(0,0,0,0.08)"></div>
<div style="position:absolute;left:1046.00px;width:0;display:flex;justify-content:center;top:569.76px;font-size:18px;line-height:1;white-space:nowrap;font-weight:normal;color:#464646;"><span id="t58" style="display:inline-block;transform:scaleX(1.0829);transform-origin:50% 0;">Store</span></div>
<div style="position:absolute;left:911.4px;top:606.2px;width:17px;height:17px;background:#fff;border:1px solid #a3a19c;border-radius:3px;box-sizing:border-box;"></div>
<div style="position:absolute;left:938.80px;top:604.76px;font-size:18px;line-height:1;white-space:nowrap;font-weight:normal;color:#464646;"><span id="t59" style="display:inline-block;transform:scaleX(0.9750);transform-origin:0 0;">Trace B</span></div>
<div style="position:absolute;left:1016.0px;top:598.8px;width:58.4px;height:33.1px;background:linear-gradient(#fdfdfc,#efeeeb);border:1px solid #c2c0bb;border-radius:4px;box-sizing:border-box;box-shadow:0 1px 0 rgba(0,0,0,0.08)"></div>
<div style="position:absolute;left:1045.30px;width:0;display:flex;justify-content:center;top:606.26px;font-size:18px;line-height:1;white-space:nowrap;font-weight:normal;color:#464646;"><span id="t60" style="display:inline-block;transform:scaleX(1.0829);transform-origin:50% 0;">Store</span></div>
<div style="position:absolute;left:901.2px;top:653.7px;width:198.1px;height:128.8px;border:1px solid #dad8d4;border-radius:5px;box-sizing:border-box;"></div>
<div style="position:absolute;left:905px;top:644px;width:121px;height:16px;background:#f2f1ef"></div>
<div style="position:absolute;left:908.00px;top:643.01px;font-size:17px;line-height:1;white-space:nowrap;font-weight:bold;color:#4a4a4a;"><span id="t61" style="display:inline-block;transform:scaleX(1.0919);transform-origin:0 0;">Axis Options</span></div>
<div style="position:absolute;left:907.50px;top:672.56px;font-size:18px;line-height:1;white-space:nowrap;font-weight:normal;color:#464646;"><span id="t62" style="display:inline-block;transform:scaleX(1.0512);transform-origin:0 0;">dB/Div:</span></div>
<div style="position:absolute;left:1042.5px;top:664.4px;width:22.4px;height:32.4px;background:linear-gradient(#fdfdfc,#efeeeb);border:1px solid #c2c0bb;border-radius:4px;box-sizing:border-box;box-shadow:0 1px 0 rgba(0,0,0,0.08)"></div>
<div style="position:absolute;left:1053.70px;width:0;display:flex;justify-content:center;top:672.46px;font-size:16px;line-height:1;white-space:nowrap;font-weight:normal;color:#464646;"><span id="t63" style="display:inline-block;">+</span></div>
<div style="position:absolute;left:1068.1px;top:664.4px;width:23.7px;height:32.4px;background:linear-gradient(#fdfdfc,#efeeeb);border:1px solid #c2c0bb;border-radius:4px;box-sizing:border-box;box-shadow:0 1px 0 rgba(0,0,0,0.08)"></div>
<div style="position:absolute;left:1080.00px;width:0;display:flex;justify-content:center;top:672.46px;font-size:16px;line-height:1;white-space:nowrap;font-weight:normal;color:#464646;"><span id="t64" style="display:inline-block;">-</span></div>
<div style="position:absolute;left:907.50px;top:708.96px;font-size:18px;line-height:1;white-space:nowrap;font-weight:normal;color:#464646;"><span id="t65" style="display:inline-block;">Ref Level:</span></div>
<div style="position:absolute;left:1042.5px;top:701.0px;width:22.4px;height:32.4px;background:linear-gradient(#fdfdfc,#efeeeb);border:1px solid #c2c0bb;border-radius:4px;box-sizing:border-box;box-shadow:0 1px 0 rgba(0,0,0,0.08)"></div>
<div style="position:absolute;left:1053.70px;width:0;display:flex;justify-content:center;top:708.96px;font-size:16px;line-height:1;white-space:nowrap;font-weight:normal;color:#464646;"><span id="t66" style="display:inline-block;">+</span></div>
<div style="position:absolute;left:1068.1px;top:701.0px;width:23.7px;height:32.4px;background:linear-gradient(#fdfdfc,#efeeeb);border:1px solid #e8845a;border-radius:4px;box-sizing:border-box;box-shadow:0 1px 0 rgba(0,0,0,0.08)"></div>
<div style="position:absolute;left:1080.00px;width:0;display:flex;justify-content:center;top:708.96px;font-size:16px;line-height:1;white-space:nowrap;font-weight:normal;color:#464646;"><span id="t67" style="display:inline-block;">-</span></div>
<div style="position:absolute;left:908.7px;top:740.1px;width:184.3px;height:37.4px;background:linear-gradient(#fdfdfc,#efeeeb);border:1px solid #c2c0bb;border-radius:4px;box-sizing:border-box;box-shadow:0 1px 0 rgba(0,0,0,0.08)"></div>
<div style="position:absolute;left:1000.90px;width:0;display:flex;justify-content:center;top:749.26px;font-size:18px;line-height:1;white-space:nowrap;font-weight:normal;color:#464646;"><span id="t68" style="display:inline-block;transform:scaleX(1.0751);transform-origin:50% 0;">Autoscale</span></div>
<div style="position:absolute;left:902.5px;top:787.5px;width:196.8px;height:36.3px;background:linear-gradient(#fdfdfc,#efeeeb);border:1px solid #c2c0bb;border-radius:4px;box-sizing:border-box;box-shadow:0 1px 0 rgba(0,0,0,0.08)"></div>
<div style="position:absolute;left:1001.60px;width:0;display:flex;justify-content:center;top:796.66px;font-size:18px;line-height:1;white-space:nowrap;font-weight:normal;color:#464646;"><span id="t69" style="display:inline-block;transform:scaleX(1.0532);transform-origin:50% 0;">Stop</span></div>
</body></html>
